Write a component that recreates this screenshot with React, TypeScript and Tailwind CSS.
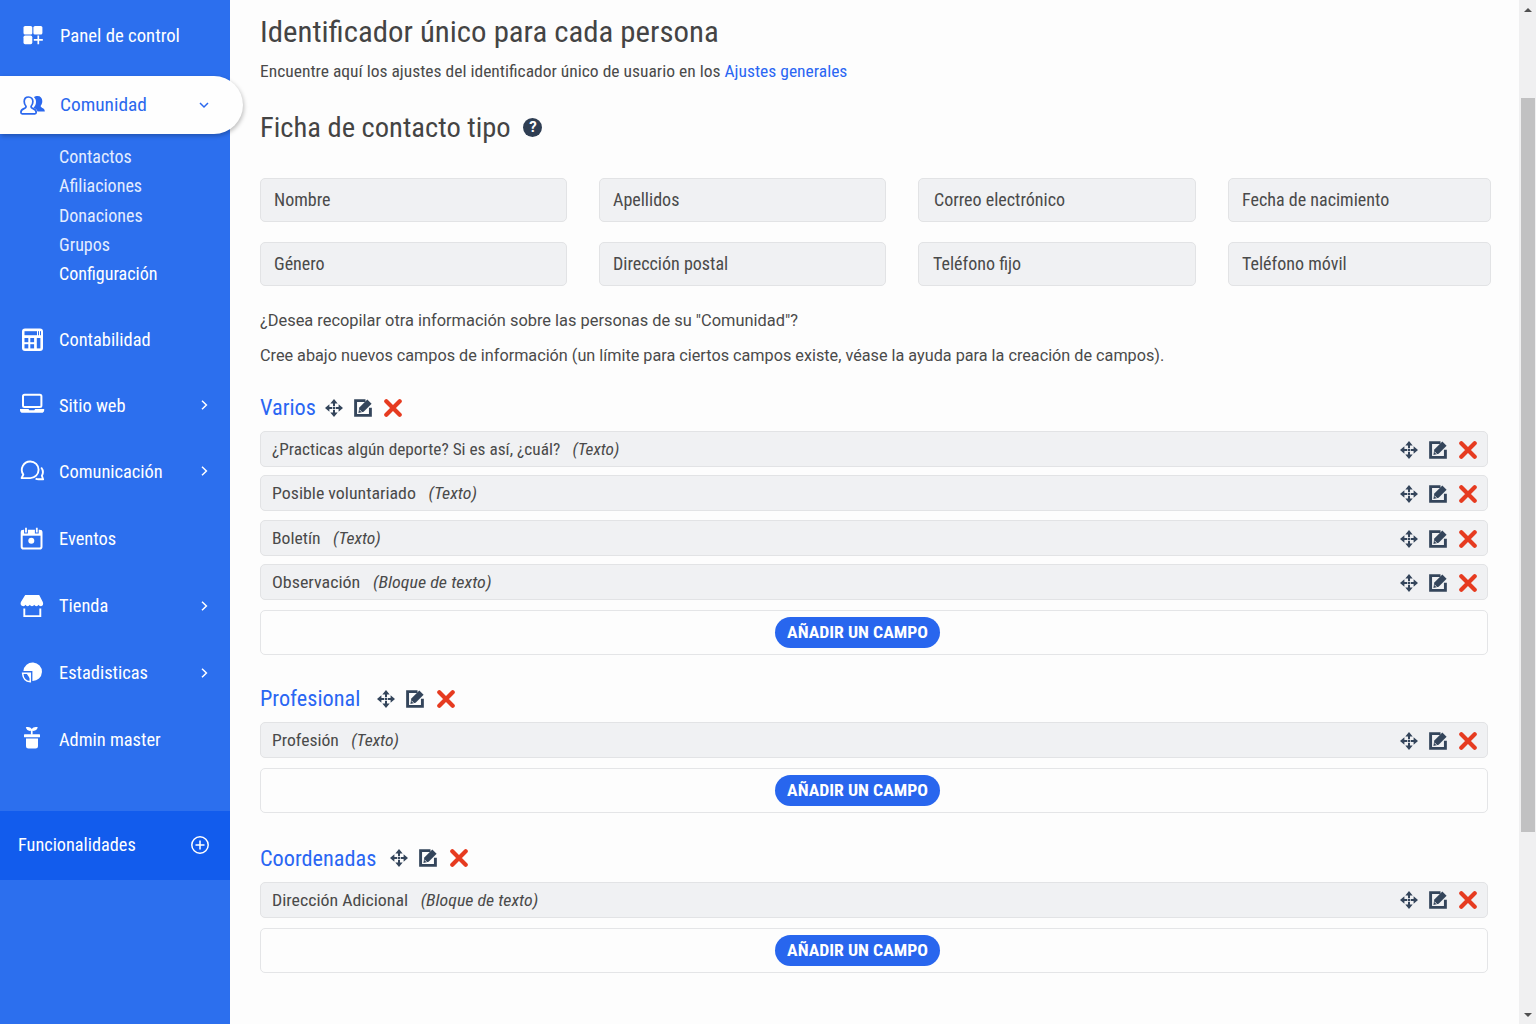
import type { ReactNode } from 'react';

interface MenuItem {
  label: string;
  icon: ReactNode;
  height: string;
  hasChildren?: boolean;
}

const DashboardIcon = () => (
  <svg viewBox="0 0 26 26" className="size-[26px] shrink-0" fill="currentColor">
    <rect x="4.5" y="4" width="8.8" height="8.6" rx="1.6" />
    <rect x="14.4" y="4" width="9" height="8.6" rx="1.6" />
    <rect x="4.5" y="13.6" width="8.8" height="8.6" rx="1.6" />
    <path d="M19.3 13.6v8.6M14.8 17.8h9" stroke="currentColor" strokeWidth="1.7" />
  </svg>
);

const CommunityIcon = () => (
  <svg viewBox="0 0 26 26" className="size-[26px] shrink-0" fill="none">
    <path
      d="M15 5.2c1-1 2.3-1.2 3.5-1.2 3 0 4.8 2 4.8 5 0 2-.6 3.4-1.5 4.6-.3 1.3.2 1.7 1.5 2.3 1.7.8 2.5 1.6 2.5 3.6h-7.3c-.5-2-1.8-3-4-3.8 1-1.5 2.5-3 2.5-5.8 0-2-.7-3.6-2-4.7z"
      fill="currentColor"
    />
    <path
      d="M9.5 5c-2.7 0-4.3 1.9-4.3 4.5 0 2 .7 3.6 1.8 4.8.3 1.3-.4 1.7-2 2.3-2.1.8-3.1 1.9-3.1 3.7 0 1 .4 1.5 1.3 1.5h12.7c.9 0 1.3-.5 1.3-1.5 0-1.8-1-2.9-3.1-3.7-1.6-.6-2.3-1-2-2.3 1.1-1.2 1.8-2.8 1.8-4.8C13.9 6.9 12.2 5 9.500 5z"
      stroke="currentColor"
      strokeWidth="1.7"
    />
  </svg>
);

const CalculatorIcon = () => (
  <svg viewBox="0 0 26 26" className="size-[26px] shrink-0">
    <rect x="3" y="1.5" width="21" height="22.5" rx="3" fill="currentColor" />
    <g className="fill-[#2c6fee]">
      <rect x="5.5" y="4.2" width="12.5" height="4" />
      <rect x="19" y="4.2" width="1" height="4" />
      <rect x="21" y="4.2" width="1" height="4" />
      <rect x="5.5" y="11" width="3.8" height="4.2" />
      <rect x="11.3" y="11" width="3.8" height="4.2" />
      <rect x="5.5" y="17.2" width="3.8" height="4.2" />
      <rect x="11.3" y="17.2" width="3.8" height="4.2" />
      <rect x="17.8" y="11" width="3.6" height="10.4" />
    </g>
  </svg>
);

const LaptopIcon = () => (
  <svg viewBox="0 0 26 26" className="size-[26px] shrink-0" fill="none">
    <rect x="4" y="2.7" width="18.4" height="12.4" rx="1.5" stroke="currentColor" strokeWidth="2" />
    <path d="M1 17h8.5l.8 1.2h5l.8-1.2h9.1v.9c0 1.9-.9 2.8-2.8 2.8H3.800C1.900 20.700 1 19.800 1 17.900z" fill="currentColor" />
  </svg>
);

const ChatIcon = () => (
  <svg viewBox="0 0 26 26" className="size-[26px] shrink-0" fill="none" stroke="currentColor" strokeWidth="1.9" strokeLinejoin="round">
    <path d="M11.3 3.5a8.2 8.2 0 0 1 0 16.6H2.6l1.7-3.6A8.3 8.3 0 0 1 11.3 3.5z" />
    <path d="M22.2 9.5c2 2.6 2.1 5.8.7 8.3l1.2 3.5h-4.5c-1.1 0-2.1-.2-3-.6" />
  </svg>
);

const CalendarIcon = () => (
  <svg viewBox="0 0 26 26" className="size-[26px] shrink-0" fill="none">
    <rect x="2.7" y="5.8" width="19.8" height="17.8" rx="1.8" stroke="currentColor" strokeWidth="2" />
    <path d="M2 5.5h21v5.2H2z" fill="currentColor" />
    <path d="M7 2.5v6M17.8 2.5v6" className="stroke-[#2c6fee]" strokeWidth="3.8" />
    <path d="M7 2.8v4.7M17.8 2.8v4.7" stroke="currentColor" strokeWidth="1.8" />
    <circle cx="12.3" cy="15.7" r="3" fill="currentColor" />
  </svg>
);

const StoreIcon = () => (
  <svg viewBox="0 0 26 26" className="size-[26px] shrink-0" fill="none">
    <path
      d="M6.2 2h14L23.8 9c.9 2.2 0 4.2-1.9 4.2-1.3 0-2-.6-2.3-1.4-.5.9-1.2 1.4-2.2 1.4s-1.7-.5-2.2-1.4c-.4.9-1.2 1.4-2.2 1.4s-1.7-.5-2.2-1.4c-.4.9-1.2 1.4-2.2 1.4s-1.6-.5-2.1-1.4c-.4.9-1.1 1.4-2.1 1.4-2.4 0-3.4-2-2.5-4.2z"
      fill="currentColor"
    />
    <path d="M5.3 15.5v7.6h16v-7.6" stroke="currentColor" strokeWidth="1.9" />
  </svg>
);

const StatsIcon = () => (
  <svg viewBox="0 0 26 26" className="size-[26px] shrink-0" fill="none">
    <path d="M4.4 11A9.3 9.3 0 1 1 13.4 21V11z" fill="currentColor" />
    <path d="M11.3 13.2v8.6c-4.6-.4-7.3-3.5-7.7-8.6z" stroke="currentColor" strokeWidth="1.5" />
    <path d="M11.3 13.2l-3.8.3 3.5 5z" fill="currentColor" />
  </svg>
);

const PlantIcon = () => (
  <svg viewBox="0 0 26 26" className="size-[26px] shrink-0" fill="currentColor">
    <path d="M6.8 1.3c2.5-.8 5-.1 6 1.8 1-1.9 3.6-2.6 6-1.8-.7 2.7-2.8 4-5.2 3.5v4h-1.7v-4C9.5 5.3 7.5 4 6.8 1.3z" />
    <rect x="5" y="8.3" width="16" height="3" rx="0.5" />
    <path d="M7 12.6h12v7.4c0 1.7-.9 2.5-2.5 2.5h-7c-1.6 0-2.5-.8-2.5-2.5z" />
  </svg>
);

const MoveIcon = () => (
  <svg viewBox="0 0 18 18" className="size-[18px] shrink-0 text-[#34455b]" fill="currentColor">
    <path d="M9 0l3.7 4.4H5.3zM9 18l-3.7-4.4h7.4zM0 9l4.4-3.7v7.4zM18 9l-4.4 3.7V5.3z" />
    <path d="M9 3.5v3.8M9 10.7v3.8M3.5 9h3.8M10.7 9h3.8" stroke="currentColor" strokeWidth="2" />
    <rect x="8" y="8" width="2" height="2" />
  </svg>
);

const EditIcon = () => (
  <svg viewBox="0 0 18 18" className="ml-[11px] size-[18px] shrink-0 text-[#34455b]" fill="none">
    <path d="M11.5 1.6H1.6v14.8h14.8V8.8" stroke="currentColor" strokeWidth="2.9" />
    <path d="M13.3.6l4.3 4.2-8 8-5.2 1.1.9-5.3z" fill="currentColor" />
    <path d="M5.4 10.7l2.2 2.2" className="stroke-[#f0f1f3]" strokeWidth="0.9" />
  </svg>
);

const DeleteIcon = () => (
  <svg viewBox="0 0 18 18" className="ml-[12.5px] size-[18px] shrink-0" fill="none">
    <path d="M2.3 2.3l13.4 13.4M15.7 2.3L2.3 15.7" className="stroke-[#e63b20]" strokeWidth="4.2" strokeLinecap="round" />
  </svg>
);

const Chevron = ({ down = false }: { down?: boolean }) => (
  <svg viewBox="0 0 10 10" className="size-[10px]" fill="none" stroke="currentColor" strokeWidth="1.5">
    <path d={down ? 'M1 3l4 4 4-4' : 'M3 .8L7.4 5 3 9.2'} />
  </svg>
);

const menu: MenuItem[] = [
  { label: 'Contabilidad', icon: <CalculatorIcon />, height: 'h-[66px]' },
  { label: 'Sitio web', icon: <LaptopIcon />, height: 'h-[65px]', hasChildren: true },
  { label: 'Comunicación', icon: <ChatIcon />, height: 'h-[67px]', hasChildren: true },
  { label: 'Eventos', icon: <CalendarIcon />, height: 'h-[67px]' },
  { label: 'Tienda', icon: <StoreIcon />, height: 'h-[68px]', hasChildren: true },
  { label: 'Estadisticas', icon: <StatsIcon />, height: 'h-[66px]', hasChildren: true },
  { label: 'Admin master', icon: <PlantIcon />, height: 'h-[67px]' },
];

const submenu = ['Contactos', 'Afiliaciones', 'Donaciones', 'Grupos', 'Configuración'];

const contactFields = [
  { label: 'Nombre', pad: 'pl-[13px]' },
  { label: 'Apellidos', pad: 'pl-[13px]' },
  { label: 'Correo electrónico', pad: 'pl-[15px]' },
  { label: 'Fecha de nacimiento', pad: 'pl-[13px]' },
  { label: 'Género', pad: 'pl-[13px]' },
  { label: 'Dirección postal', pad: 'pl-[13px]' },
  { label: 'Teléfono fijo', pad: 'pl-[14px]' },
  { label: 'Teléfono móvil', pad: 'pl-[13px]' },
];

const sections = [
  {
    title: 'Varios',
    gap: 'gap-[9px]',
    margin: 'mt-[22.5px]',
    fields: [
      { name: '¿Practicas algún deporte? Si es así, ¿cuál?', type: 'Texto', scale: 'scale-x-[1.016]' },
      { name: 'Posible voluntariado', type: 'Texto', scale: 'scale-x-[1.05]' },
      { name: 'Boletín', type: 'Texto', scale: 'scale-x-[1.035]' },
      { name: 'Observación', type: 'Bloque de texto', scale: 'scale-x-[1.058]' },
    ],
  },
  {
    title: 'Profesional',
    gap: 'gap-[17.5px]',
    margin: 'mt-[31.5px]',
    fields: [{ name: 'Profesión', type: 'Texto', scale: 'scale-x-[1.035]' }],
  },
  {
    title: 'Coordenadas',
    gap: 'gap-[15px]',
    margin: 'mt-[33px]',
    fields: [{ name: 'Dirección Adicional', type: 'Bloque de texto', scale: 'scale-x-[1.05]' }],
  },
];

const Actions = () => (
  <div className="flex items-center">
    <MoveIcon />
    <EditIcon />
    <DeleteIcon />
  </div>
);

const Sidebar = () => (
  <aside className="h-full w-[230px] shrink-0 bg-[#2c6fee] text-[18px] text-white">
    <div className="flex h-[76px] items-center gap-[15px] pb-[6px] pl-[19px]">
      <DashboardIcon />
      <span className="origin-left scale-x-[1.04]">Panel de control</span>
    </div>

    {/* Active item, wider than the sidebar */}
    <div className="relative z-10 flex h-[58px] w-[242.5px] items-center gap-[15px] rounded-r-full bg-[#fefefe] pb-px pl-[19px] text-[#2b68ee] shadow-[1px_2px_4px_rgba(0,0,0,0.25)]">
      <CommunityIcon />
      <span className="flex-1 origin-left scale-x-[1.075]">Comunidad</span>
      <span className="mr-[33.5px]">
        <Chevron down />
      </span>
    </div>

    <ul className="h-[173px] origin-left scale-x-[1.03] pl-[57.3px] pt-[9px] text-[17.5px] leading-[29.25px]">
      {submenu.map((item) => (
        <li key={item} className={item === 'Configuración' ? 'text-white' : 'text-[#e3ecff]'}>
          {item}
        </li>
      ))}
    </ul>

    <nav>
      {menu.map((item) => (
        <div key={item.label} className={`flex items-center gap-[14px] pb-px pl-[19px] ${item.height}`}>
          {item.icon}
          <span className="flex-1 origin-left scale-x-[1.022]">{item.label}</span>
          {item.hasChildren && (
            <span className="mr-[21px]">
              <Chevron />
            </span>
          )}
        </div>
      ))}
    </nav>

    <div className="mt-[38px] flex h-[69px] items-center justify-between bg-[#125ced] pb-[2px] pl-[18px] pr-[21px]">
      <span className="origin-left scale-x-[1.014]">Funcionalidades</span>
      <svg viewBox="0 0 18 18" className="size-[18px]" fill="none" stroke="currentColor" strokeWidth="1.5">
        <circle cx="9" cy="9" r="8.2" />
        <path d="M9 4.5v9M4.5 9h9" />
      </svg>
    </div>
  </aside>
);

const ScrollBar = () => (
  <div className="flex h-full w-[17px] shrink-0 flex-col items-center bg-[#f0f0f1]">
    <svg viewBox="0 0 8 4" className="mt-[8px] h-[4px] w-[8px] fill-[#505050]">
      <path d="M4 0l4 4H0z" />
    </svg>
    <div className="mt-[86px] h-[734px] w-[14px] bg-[#c1c1c2]" />
    <svg viewBox="0 0 8 4" className="mb-[7px] mt-auto h-[4px] w-[8px] fill-[#505050]">
      <path d="M0 0h8L4 4z" />
    </svg>
  </div>
);

export default function App() {
  return (
    <div className="flex h-screen overflow-hidden bg-[#fdfdfd] font-['Roboto_Condensed',Roboto,sans-serif] text-[#4a4a4a]">
      <Sidebar />

      <main className="min-w-0 flex-1 pl-[30.4px]">
        <h1 className="h-[50px] origin-left scale-x-[1.045] pt-[12px] text-[29.5px] leading-[40px] text-[#444]">
          Identificador único para cada persona
        </h1>
        <p className="mt-[9px] origin-left scale-x-[1.029] text-[17px] leading-[24px]">
          Encuentre aquí los ajustes del identificador único de usuario en los{' '}
          <a className="text-[#2a66f3]">Ajustes generales</a>
        </p>

        <div className="mt-[25px] flex h-[39px] items-center gap-[21.5px]">
          <h2 className="origin-left scale-x-[1.038] text-[27.5px] text-[#444]">Ficha de contacto tipo</h2>
          <span className="flex size-[19px] items-center justify-center rounded-full bg-[#2f3e53] font-[Roboto] text-[15px] font-bold leading-none text-white">
            ?
          </span>
        </div>

        <div className="mt-[31px] grid grid-cols-[307px_287px_278px_263px] gap-x-[32px] gap-y-[20px]">
          {contactFields.map((field) => (
            <div
              key={field.label}
              className={`flex h-[44px] items-center rounded-[5px] border border-[#e2e3e5] bg-[#f0f1f3] text-[17.5px] ${field.pad}`}
            >
              <span className="origin-left scale-x-[1.03]">{field.label}</span>
            </div>
          ))}
        </div>

        <div className="mt-[17px] whitespace-nowrap font-[Roboto] text-[17px] leading-[35px]">
          <p className="origin-left scale-x-[0.964]">¿Desea recopilar otra información sobre las personas de su "Comunidad"?</p>
          <p className="origin-left scale-x-[0.954]">
            Cree abajo nuevos campos de información (un límite para ciertos campos existe, véase la ayuda para la creación de campos).
          </p>
        </div>

        {sections.map((section) => (
          <section key={section.title} className={`w-[1228px] ${section.margin}`}>
            <div className={`flex h-[24px] items-center ${section.gap}`}>
              <h3 className="origin-left scale-x-[1.012] text-[22px] text-[#2a66f3]">{section.title}</h3>
              <Actions />
            </div>
            <div className="mt-[11.5px] flex flex-col gap-[8.4px]">
              {section.fields.map((field) => (
                <div
                  key={field.name}
                  className="flex h-[36px] items-center justify-between rounded-[5px] border border-[#e2e3e5] bg-[#f0f1f3] pl-[11px] pr-[10px] pt-[1.5px] text-[17px]"
                >
                  <p className={`origin-left ${field.scale}`}>
                    {field.name}
                    <em className="ml-[12px]">({field.type})</em>
                  </p>
                  <Actions />
                </div>
              ))}
            </div>
            <div className="mt-[10px] flex h-[45px] items-center justify-center rounded-[5px] border border-[#e4e5e7] pr-[34px]">
              <button className="h-[31px] w-[165px] rounded-full bg-[#2866ee] pt-px text-[17px] font-bold text-white">
                <span className="inline-block scale-x-[1.044]">AÑADIR UN CAMPO</span>
              </button>
            </div>
          </section>
        ))}
      </main>

      <ScrollBar />
    </div>
  );
}
